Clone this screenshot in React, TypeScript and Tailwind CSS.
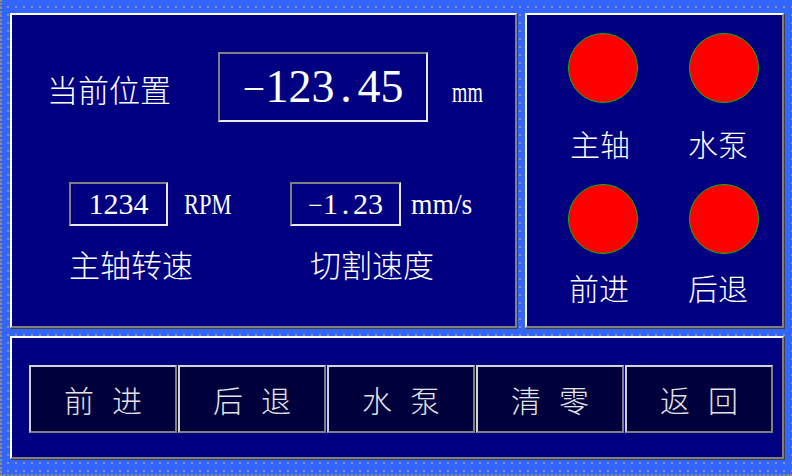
import React from 'react';

const cjk = "font-['Noto_Sans_CJK_SC',sans-serif] font-light";
const serif = "font-['Liberation_Serif',serif]";

// raised panel: white top/left, grey bottom/right
const Panel = ({ className = '', children }: { className?: string; children: React.ReactNode }) => (
  <div
    className={`border-2 border-t-white border-l-white border-r-[#808080] border-b-[#808080] bg-[#000080] shadow-[1px_1px_0_#404040] ${className}`}
  >
    {children}
  </div>
);

// half-width cells, like a fixed pitch HMI font
const Cells = ({ text }: { text: string }) => (
  <span className="inline-flex items-baseline">
    {text.split('').map((ch, i) => (
      <span key={i} className="inline-block w-[0.5em] text-center">
        {ch === '−' ? <span className="text-[0.86em]">{ch}</span> : ch}
      </span>
    ))}
  </span>
);

const ValueBox = ({ value, className }: { value: string; className: string }) => (
  <div
    className={`flex items-center justify-center border-2 border-t-[#808080] border-l-[#808080] border-r-[#e8e8e8] border-b-[#e8e8e8] text-white leading-none ${serif} ${className}`}
  >
    <Cells text={value} />
  </div>
);

const Lamp = () => <div className="h-[70px] w-[70px] rounded-full border border-[#00c000] bg-[#ff0000]" />;

const lamps = [
  [
    { label: '主轴', shift: 'mr-[6px]' },
    { label: '水泵', shift: 'mr-[12px]' },
  ],
  [
    { label: '前进', shift: 'mr-[8px]' },
    { label: '后退', shift: 'mr-[12px]' },
  ],
];

const buttons = [
  ['前', '进'],
  ['后', '退'],
  ['水', '泵'],
  ['清', '零'],
  ['返', '回'],
];

export default function App() {
  return (
    <div className="h-[476px] w-[792px] overflow-hidden border-b-2 border-l-2 border-dotted border-[#9a8c6c] bg-[#3366ff] bg-[radial-gradient(circle,#8c8cb4_0.8px,transparent_1.2px)] bg-size-[8px_8px] bg-position-[2px_3px] pl-[8px] pt-[13px]">
      <div className="flex gap-[8px]">
        {/* measurements */}
        <Panel className="h-[315px] w-[507px]">
          <div className="flex items-baseline pl-[35px] pt-[37px] text-white">
            <span className={`text-[31px] leading-none ${cjk}`}>当前位置</span>
            <ValueBox value="−123.45" className="ml-[47px] h-[70px] w-[210px] text-[46px]" />
            <span className={`ml-[24px] inline-block origin-left scale-x-[0.66] text-[30px] leading-none ${serif}`}>mm</span>
          </div>

          <div className="mt-[60px] flex pl-[57px] text-white">
            <div className="flex w-[221px] flex-col">
              <div className="flex items-baseline">
                <ValueBox value="1234" className="h-[44px] w-[99px] text-[30px]" />
                <span className={`ml-[16px] inline-block origin-left scale-x-[0.75] text-[30px] leading-none ${serif}`}>RPM</span>
              </div>
              <span className={`mt-[22px] text-[31px] leading-none ${cjk}`}>主轴转速</span>
            </div>
            <div className="flex flex-col">
              <div className="flex items-baseline">
                <ValueBox value="−1.23" className="h-[44px] w-[111px] text-[30px]" />
                <span className={`ml-[10px] inline-block origin-left scale-x-[0.92] text-[30px] leading-none ${serif}`}>mm/s</span>
              </div>
              <span className={`ml-[20px] mt-[22px] text-[31px] leading-none ${cjk}`}>切割速度</span>
            </div>
          </div>
        </Panel>

        {/* status lamps */}
        <Panel className="h-[315px] w-[259px]">
          <div className="flex flex-col pl-[41px] pt-[18px]">
            {lamps.map((row, r) => (
              <div key={r} className={`flex gap-x-[51px] ${r === 1 ? 'mt-[26px]' : ''}`}>
                {row.map((l) => (
                  <div key={l.label} className="flex w-[70px] flex-col items-center">
                    <Lamp />
                    <span
                      className={`${r === 0 ? 'mt-[25px]' : 'mt-[18px]'} ${l.shift} whitespace-nowrap text-[30px] leading-none text-white ${cjk}`}
                    >
                      {l.label}
                    </span>
                  </div>
                ))}
              </div>
            ))}
          </div>
        </Panel>
      </div>

      {/* command buttons */}
      <Panel className="mt-[8px] h-[123px] w-[774px]">
        <div className="flex gap-[1px] pl-[17px] pt-[27px]">
          {buttons.map(([a, b]) => (
            <button
              key={a + b}
              type="button"
              className={`flex h-[68px] w-[148px] items-center justify-center gap-[18px] border-2 border-t-[#d4d4d4] border-l-[#d4d4d4] border-r-[#808080] border-b-[#808080] bg-[#00003c] text-[30px] leading-none text-[#e4e4e4] ${cjk}`}
            >
              <span>{a}</span>
              <span>{b}</span>
            </button>
          ))}
        </div>
      </Panel>
    </div>
  );
}
